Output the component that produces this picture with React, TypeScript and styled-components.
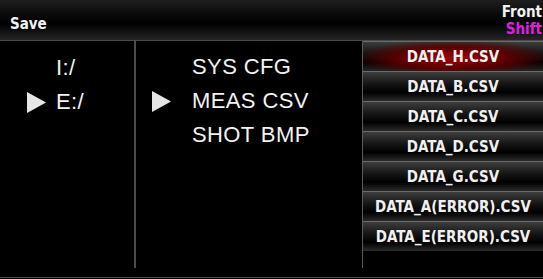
import React from "react";
import styled, { createGlobalStyle } from "styled-components";

const GlobalStyle = createGlobalStyle`
  html, body {
    margin: 0;
    padding: 0;
    background: #000;
  }
  body {
    width: 543px;
    height: 279px;
    overflow: hidden;
  }
`;

const drives = [
  { name: "I:/", active: false },
  { name: "E:/", active: true },
];

const folders = [
  { name: "SYS CFG", active: false },
  { name: "MEAS CSV", active: true },
  { name: "SHOT BMP", active: false },
];

const files = [
  "DATA_H.CSV",
  "DATA_B.CSV",
  "DATA_C.CSV",
  "DATA_D.CSV",
  "DATA_G.CSV",
  "DATA_A(ERROR).CSV",
  "DATA_E(ERROR).CSV",
];

const Arrow = () => (
  <svg width="19" height="21" viewBox="0 0 19 21">
    <polygon points="0,0 19,10.5 0,21" fill="#e6e6e6" />
  </svg>
);

const App = (): JSX.Element => {
  return (
    <Screen>
      <GlobalStyle />
      <Header>
        <Title>Save</Title>
        <Status>
          <StatusText>Front</StatusText>
          <StatusText shift>Shift</StatusText>
        </Status>
      </Header>
      <Main>
        <DriveColumn>
          {drives.map((d) => (
            <Entry key={d.name}>
              <Marker>{d.active && <Arrow />}</Marker>
              <EntryText>{d.name}</EntryText>
            </Entry>
          ))}
        </DriveColumn>
        <FolderColumn>
          {folders.map((f) => (
            <Entry key={f.name} wide>
              <Marker>{f.active && <Arrow />}</Marker>
              <EntryText>{f.name}</EntryText>
            </Entry>
          ))}
        </FolderColumn>
        <FileColumn>
          {files.map((f, i) => (
            <FileButton key={f} selected={i === 0}>
              {f}
            </FileButton>
          ))}
        </FileColumn>
      </Main>
      <Footer />
    </Screen>
  );
};

export default App;

const Screen = styled.div`
  width: 543px;
  height: 279px;
  background: #000;
  display: flex;
  flex-direction: column;
  overflow: hidden;
`;

const Header = styled.div`
  height: 40px;
  border-bottom: 1px solid #4a4a4a;
  background: linear-gradient(#1e1e1e 0%, #050505 45%, #000 60%, #262626 100%);
  display: flex;
  align-items: center;
  justify-content: space-between;
  padding: 0 1px 0 10px;
  box-sizing: content-box;
`;

const Title = styled.div`
  font-family: "DejaVu Sans Condensed", "DejaVu Sans", sans-serif;
  font-weight: bold;
  font-size: 15px;
  color: #f2f2f2;
  margin-top: 7px;
`;

const Status = styled.div`
  display: flex;
  flex-direction: column;
  align-items: flex-end;
  line-height: 17px;
  margin-top: 1px;
`;

const StatusText = styled.span<{ shift?: boolean }>`
  font-family: "DejaVu Sans Condensed", "DejaVu Sans", sans-serif;
  font-weight: bold;
  font-size: 15px;
  color: ${({ shift }) => (shift ? "#e020e0" : "#f2f2f2")};
`;

const Main = styled.div`
  height: 227px;
  display: flex;
`;

const DriveColumn = styled.div`
  width: 136px;
  border-right: 2px solid #4c4c4c;
  padding: 10px 0 0 27px;
  box-sizing: border-box;
  display: flex;
  flex-direction: column;
`;

const FolderColumn = styled.div`
  width: 227px;
  border-right: 1px solid #5a5a5a;
  padding: 9px 0 0 16px;
  box-sizing: border-box;
  display: flex;
  flex-direction: column;
`;

const Entry = styled.div<{ wide?: boolean }>`
  height: 34px;
  display: flex;
  align-items: center;
  gap: ${({ wide }) => (wide ? "21px" : "10px")};
`;

const Marker = styled.div`
  width: 19px;
  height: 21px;
  display: flex;
`;

const EntryText = styled.span`
  font-family: "Liberation Sans", Arial, sans-serif;
  font-size: 22px;
  color: #f2f2f2;
  letter-spacing: 0.4px;
`;

const FileColumn = styled.div`
  flex: 1;
  display: flex;
  flex-direction: column;
`;

const FileButton = styled.div<{ selected?: boolean }>`
  height: 30px;
  box-sizing: border-box;
  border-top: 1px solid #6a6a6a;
  display: flex;
  align-items: center;
  justify-content: center;
  font-family: "DejaVu Sans Condensed", "DejaVu Sans", sans-serif;
  font-weight: bold;
  font-size: 15px;
  color: #f0f0f0;
  background: ${({ selected }) =>
    selected
      ? "radial-gradient(ellipse 55% 65% at 50% 55%, #a00000 0%, #5a0000 55%, transparent 100%), linear-gradient(#3c3c3c 0%, #151515 40%, #000 70%, #262626 100%)"
      : "linear-gradient(#3e3e3e 0%, #161616 40%, #000 70%, #2a2a2a 100%)"};
`;

const Footer = styled.div`
  margin-top: 9px;
  height: 1px;
  background: #4a4a4a;
`;
